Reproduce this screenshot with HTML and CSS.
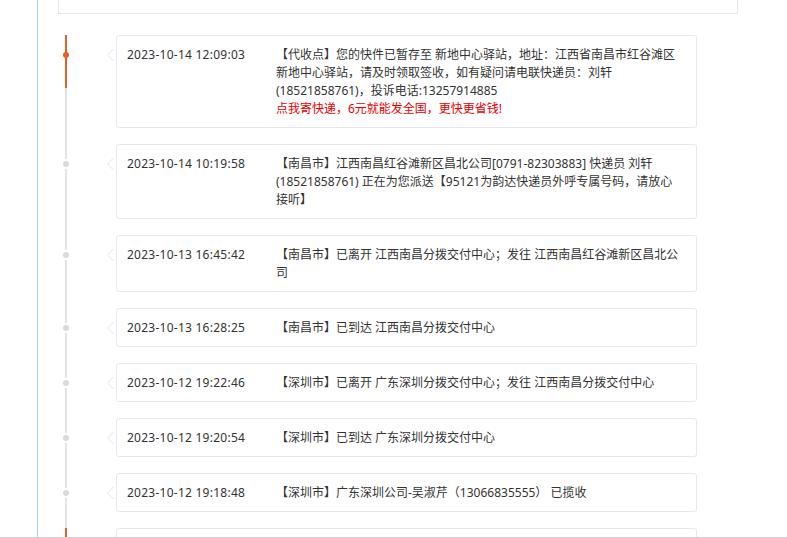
FILE: index.html
```html
<!DOCTYPE html>
<html>
<head>
  <meta charset="utf-8">
  <title>物流详情</title>
  <link rel="stylesheet" href="styles.css">
</head>
<body>
  <div class="viewport">
    <div class="frame">
      <div class="summary"></div>

      <div class="timeline">
        <div class="item active">
          <div class="rail"><span class="dot"></span></div>
          <div class="card">
            <div class="time">2023-10-14 12:09:03</div>
            <div class="desc">
              【代收点】您的快件已暂存至 新地中心驿站，地址：江西省南昌市红谷滩区新地中心驿站，请及时领取签收，如有疑问请电联快递员：刘轩(18521858761)，投诉电话:13257914885
              <a class="promo" href="#">点我寄快递，6元就能发全国，更快更省钱!</a>
            </div>
          </div>
        </div>

        <div class="item">
          <div class="rail"><span class="dot"></span></div>
          <div class="card">
            <div class="time">2023-10-14 10:19:58</div>
            <div class="desc">【南昌市】江西南昌红谷滩新区昌北公司[0791-82303883] 快递员 刘轩 (18521858761) 正在为您派送【95121为韵达快递员外呼专属号码，请放心接听】</div>
          </div>
        </div>

        <div class="item">
          <div class="rail"><span class="dot"></span></div>
          <div class="card">
            <div class="time">2023-10-13 16:45:42</div>
            <div class="desc">【南昌市】已离开 江西南昌分拨交付中心；发往 江西南昌红谷滩新区昌北公司</div>
          </div>
        </div>

        <div class="item">
          <div class="rail"><span class="dot"></span></div>
          <div class="card">
            <div class="time">2023-10-13 16:28:25</div>
            <div class="desc">【南昌市】已到达 江西南昌分拨交付中心</div>
          </div>
        </div>

        <div class="item">
          <div class="rail"><span class="dot"></span></div>
          <div class="card">
            <div class="time">2023-10-12 19:22:46</div>
            <div class="desc">【深圳市】已离开 广东深圳分拨交付中心；发往 江西南昌分拨交付中心</div>
          </div>
        </div>

        <div class="item">
          <div class="rail"><span class="dot"></span></div>
          <div class="card">
            <div class="time">2023-10-12 19:20:54</div>
            <div class="desc">【深圳市】已到达 广东深圳分拨交付中心</div>
          </div>
        </div>

        <div class="item">
          <div class="rail"><span class="dot"></span></div>
          <div class="card">
            <div class="time">2023-10-12 19:18:48</div>
            <div class="desc">【深圳市】广东深圳公司-吴淑芹（13066835555） 已揽收</div>
          </div>
        </div>

        <div class="item active">
          <div class="rail"><span class="dot"></span></div>
          <div class="card"></div>
        </div>
      </div>
    </div>
  </div>
</body>
</html>
```

FILE: styles.css
```css
body {
  margin: 0;
  background-color: #fff;
  font-family: "Noto Sans", "Noto Sans CJK SC", sans-serif;
  font-size: 12px;
  color: #333;
}

.viewport {
  height: 537px;
  overflow: hidden;
  border-bottom: 1px solid #cfcfcf;
}

.frame {
  margin-left: 37px;
  min-height: 100%;
  border-left: 1px solid #a6d3ea;
}

.summary {
  margin-left: 20px;
  width: 678px;
  height: 13px;
  border: 1px solid #e6e6e6;
  border-top: none;
}

.timeline {
  margin-top: 21px;
}

.item {
  display: flex;
}

.rail {
  position: relative;
  flex: none;
  width: 2px;
  margin-left: 27px;
  margin-right: 49px;
  background-color: #e4e4e4;
}

.item.active .rail {
  background: linear-gradient(#e8611f 0, #e8611f 53px, #e4e4e4 53px);
}

.dot {
  position: absolute;
  top: 17px;
  left: -2px;
  width: 6px;
  height: 6px;
  border-radius: 50%;
  background-color: #dadada;
  box-shadow: 0 0 0 2px #fff;
}

.item.active .dot {
  background-color: #e8611f;
  box-shadow: none;
}

.card {
  position: relative;
  display: flex;
  width: 581px;
  min-height: 39px;
  box-sizing: border-box;
  margin-bottom: 16px;
  padding: 10px 14px 9px 10px;
  border: 1px solid #e8e8e8;
  border-radius: 3px;
  line-height: 18px;
}

/* faint arrow pointing at the rail */
.card::before {
  content: "";
  position: absolute;
  left: -9px;
  top: 14px;
  width: 8px;
  height: 8px;
  border-left: 2px solid #f2f2f2;
  border-bottom: 2px solid #f2f2f2;
  border-radius: 0 0 0 3px;
  transform: rotate(45deg);
}

.time {
  flex: none;
  width: 149px;
  letter-spacing: 0.25px;
  color: #333;
}

.desc {
  flex: 1;
  color: #333;
}

.promo {
  display: block;
  color: #e60000;
  text-decoration: none;
}
```
